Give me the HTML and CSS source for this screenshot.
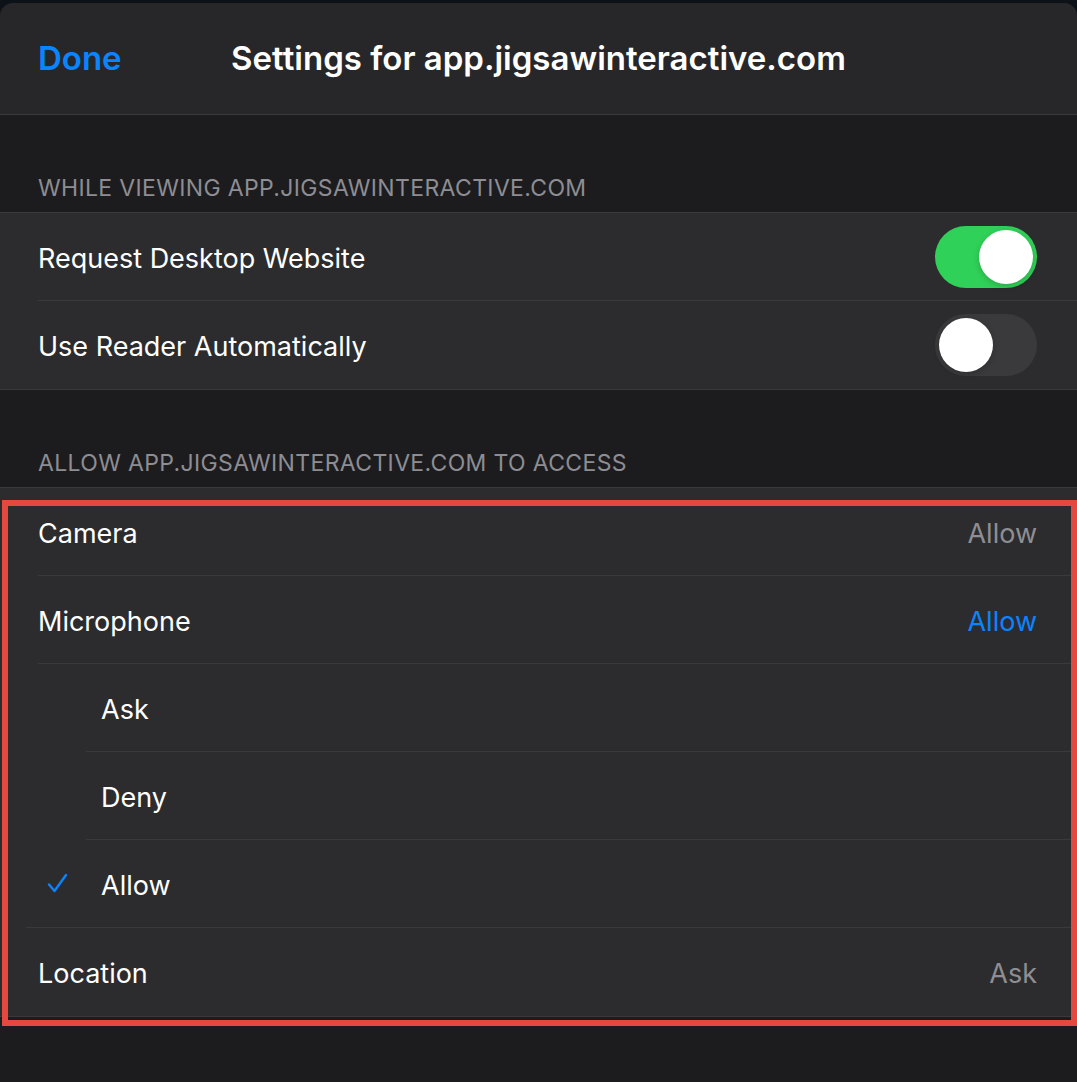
FILE: index.html
```html
<!DOCTYPE html>
<html>
<head>
<meta charset="utf-8">
<link rel="stylesheet" href="styles.css">
</head>
<body>
<div class="sheet">
  <header class="navbar">
    <span class="done">Done</span>
    <span class="title">Settings for app.jigsawinteractive.com</span>
  </header>

  <div class="section-header">WHILE VIEWING APP.JIGSAWINTERACTIVE.COM</div>
  <div class="group">
    <div class="row">
      <div class="row-inner">
        <span class="label">Request Desktop Website</span>
        <span class="switch on"><span class="knob"></span></span>
      </div>
    </div>
    <div class="row">
      <div class="row-inner last">
        <span class="label">Use Reader Automatically</span>
        <span class="switch off"><span class="knob"></span></span>
      </div>
    </div>
  </div>

  <div class="section-header">ALLOW APP.JIGSAWINTERACTIVE.COM TO ACCESS</div>
  <div class="group highlight-wrap">
    <div class="row">
      <div class="row-inner">
        <span class="label">Camera</span>
        <span class="value">Allow</span>
      </div>
    </div>
    <div class="row">
      <div class="row-inner">
        <span class="label">Microphone</span>
        <span class="value active">Allow</span>
      </div>
    </div>
    <div class="row sub">
      <div class="row-inner">
        <span class="check"></span>
        <span class="label">Ask</span>
      </div>
    </div>
    <div class="row sub">
      <div class="row-inner">
        <span class="check"></span>
        <span class="label">Deny</span>
      </div>
    </div>
    <div class="row sub checked">
      <div class="row-inner">
        <span class="check">
          <svg width="22" height="20" viewBox="0 0 22 20"><path d="M2 11.5 L7.5 18 L19 2" fill="none" stroke="#0a84ff" stroke-width="2.4" stroke-linecap="round" stroke-linejoin="round"/></svg>
        </span>
        <span class="label">Allow</span>
      </div>
    </div>
    <div class="row">
      <div class="row-inner last">
        <span class="label">Location</span>
        <span class="value">Ask</span>
      </div>
    </div>
    <div class="highlight"></div>
  </div>
</div>
</body>
</html>
```

FILE: styles.css
```css
html, body {
  margin: 0;
  padding: 0;
}
body {
  background: #0d1218;
  font-family: Inter, "Noto Sans", "Liberation Sans", sans-serif;
  -webkit-font-smoothing: antialiased;
  height: 1082px;
  overflow: hidden;
}
.sheet {
  margin-top: 3px;
  height: 1079px;
  background: #1c1c1e;
  border-radius: 13px 13px 0 0;
  overflow: hidden;
}
.navbar {
  position: relative;
  height: 111px;
  background: #272729;
  border-bottom: 1px solid #3a3a3c;
  display: flex;
  align-items: center;
  justify-content: center;
}
.done {
  position: absolute;
  left: 38px;
  top: 35px;
  color: #0a84ff;
  font-size: 33px;
  font-weight: 600;
}
.title {
  color: #ffffff;
  font-size: 33px;
  font-weight: 600;
  margin-top: -1px;
}
.section-header {
  height: 98px;
  box-sizing: border-box;
  padding: 0 38px 10px;
  display: flex;
  align-items: flex-end;
  color: #8d8d93;
  font-size: 23px;
  letter-spacing: 0.35px;
  border-bottom: 1px solid #3a3a3c;
}
.group {
  background: #2c2c2e;
  border-bottom: 1px solid #3a3a3c;
}
.highlight-wrap {
  position: relative;
}
.row {
  height: 88px;
  padding-left: 38px;
}
.row.sub {
  padding-left: 86px;
}
.row-inner {
  height: 88px;
  box-sizing: border-box;
  display: flex;
  align-items: center;
  justify-content: space-between;
  padding-right: 40px;
  padding-top: 3px;
  border-bottom: 1px solid #3a3a3c;
  position: relative;
}
.row-inner.last {
  border-bottom: none;
}
.sub .row-inner {
  justify-content: flex-start;
  padding-left: 15px;
}
.row.checked {
  padding-left: 0;
}
.row.checked .row-inner {
  margin-left: 26px;
  padding-left: 0;
}
.check {
  display: none;
}
.row.checked .check {
  display: block;
  width: 75px;
  padding-left: 21px;
  box-sizing: border-box;
  height: 20px;
  margin-top: -4px;
}
.label {
  color: #ffffff;
  font-size: 27px;
}
.value {
  color: #8e8e93;
  font-size: 27px;
}
.value.active {
  color: #0a84ff;
}
.switch {
  width: 102px;
  height: 62px;
  border-radius: 31px;
  display: flex;
  align-items: center;
  box-sizing: border-box;
  padding: 0 4px;
  margin-top: -3px;
}
.switch.on {
  background: #30d158;
  justify-content: flex-end;
}
.switch.off {
  background: #3a3a3d;
  justify-content: flex-start;
}
.knob {
  width: 54px;
  height: 54px;
  border-radius: 50%;
  background: #ffffff;
  box-shadow: 0 2px 6px rgba(0,0,0,0.2);
}
.highlight {
  position: absolute;
  left: 2px;
  right: 0;
  top: 12px;
  bottom: -10px;
  border: 6px solid #e5483f;
  pointer-events: none;
}
```
